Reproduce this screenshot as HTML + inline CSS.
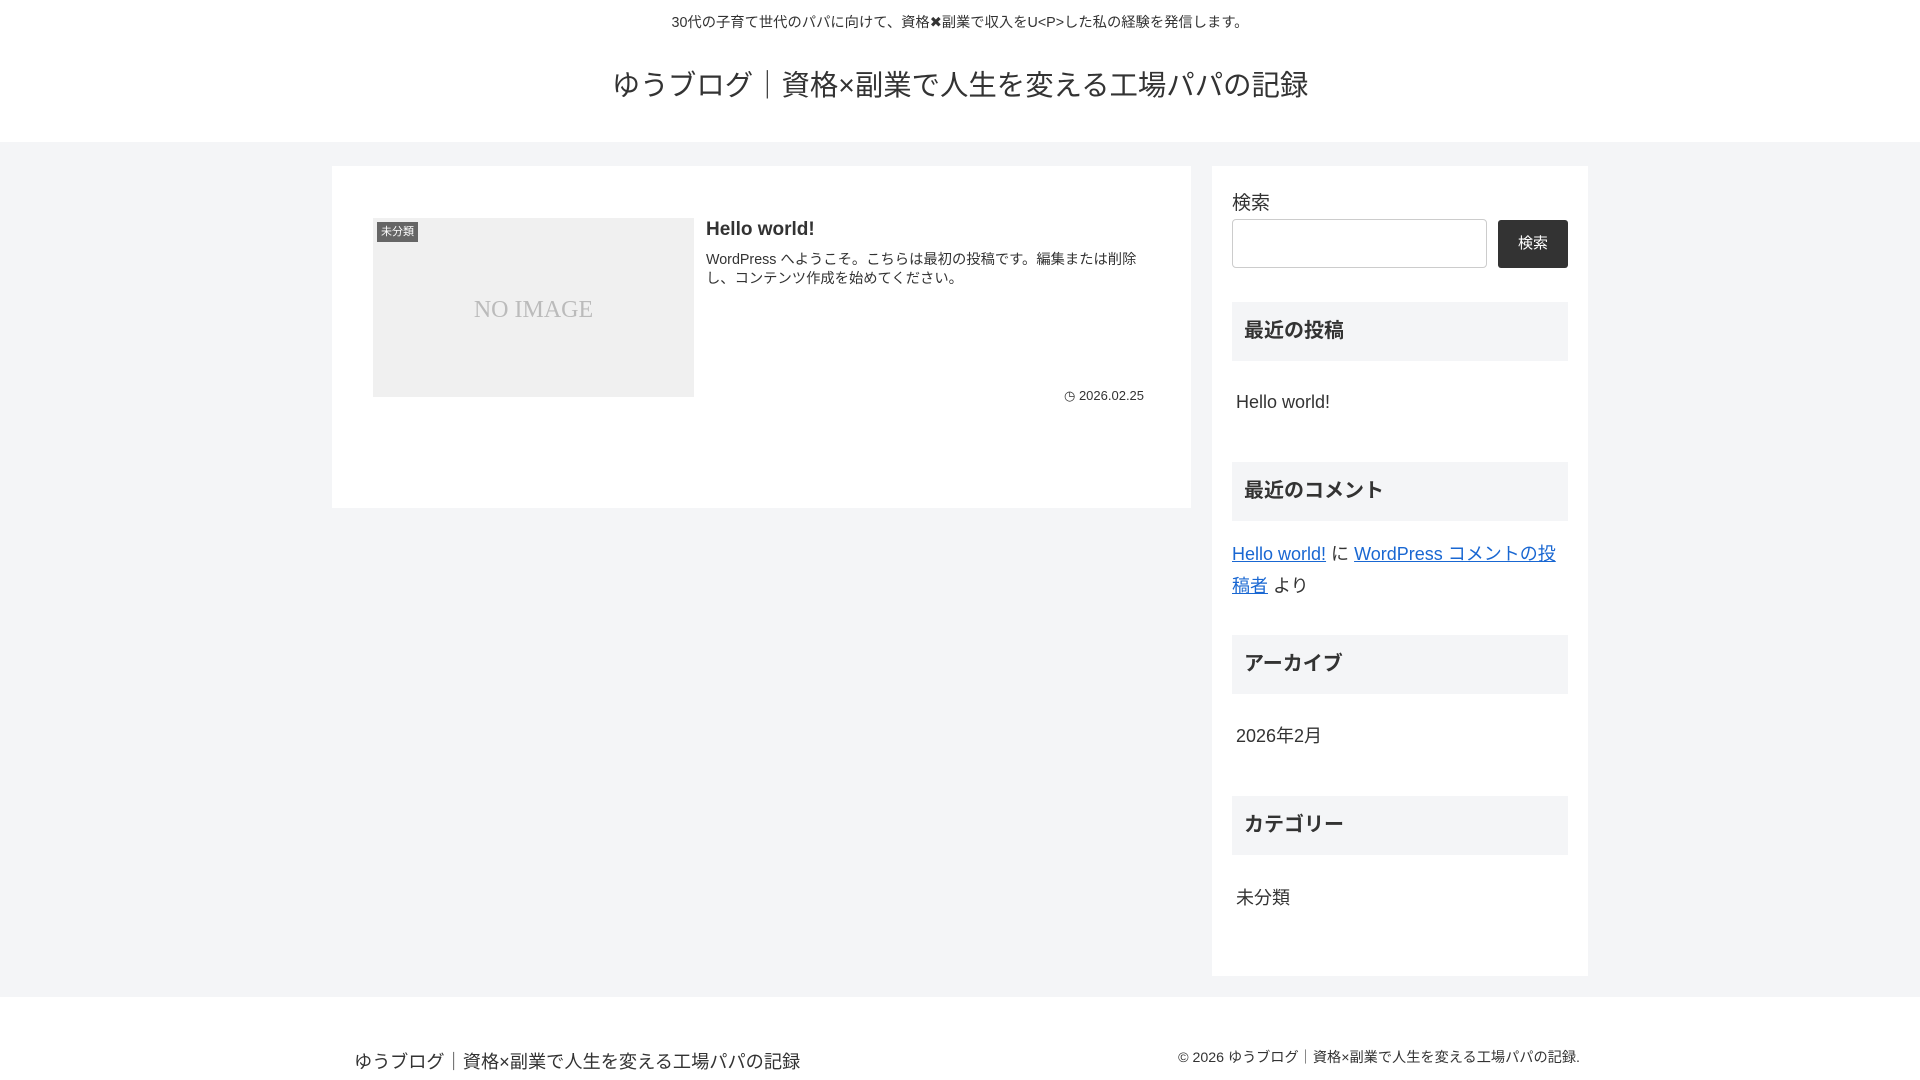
<!DOCTYPE html>
<html lang="ja"><head><meta charset="utf-8">
<style>
*{box-sizing:border-box;margin:0;padding:0}
body{width:1920px;height:1080px;overflow:hidden;background:#f4f5f7;font-family:"Liberation Sans","Noto Sans CJK JP",sans-serif;color:#333;position:relative}
.abs{position:absolute;white-space:nowrap}
header{position:absolute;left:0;top:0;width:1920px;height:142px;background:#fff}
footer{position:absolute;left:0;top:997px;width:1920px;height:83px;background:#fff}
.card{position:absolute;background:#fff}
.wh{position:absolute;left:1232px;width:336px;height:59px;background:#f4f5f7;font-weight:bold;font-size:20px;padding-left:12px;line-height:59px;color:#333}
a{color:#1967d2}
</style></head><body>
<header>
<div class="abs" style="left:0;width:1920px;text-align:center;top:11px;font-size:14.3px;color:#333">30代の子育て世代のパパに向けて、資格✖副業で収入をU&lt;P&gt;した私の経験を発信します。</div>
<div class="abs" style="left:0;width:1920px;text-align:center;top:67px;font-size:28.4px;line-height:38px;color:#333">ゆうブログ｜資格×副業で人生を変える工場パパの記録</div>
</header>

<div class="card" style="left:332px;top:166px;width:859px;height:342px"></div>
<div class="abs" style="left:373px;top:218px;width:321px;height:179px;background:#f0f0f0"></div>
<div class="abs" style="left:373px;top:297px;width:321px;text-align:center;font-family:'Liberation Serif',serif;font-size:24px;color:#bbb">NO IMAGE</div>
<div class="abs" style="left:377px;top:222px;height:20px;padding:0 4px;background:#666;color:#fff;font-size:11px;line-height:20px">未分類</div>
<div class="abs" style="left:706px;top:219px;font-size:19px;font-weight:bold;color:#333">Hello world!</div>
<div class="abs" style="left:706px;top:251px;font-size:14.3px;line-height:19px;color:#333">WordPress へようこそ。こちらは最初の投稿です。編集または削除<br>し、コンテンツ作成を始めてください。</div>
<div class="abs" style="left:1064px;top:388px;font-size:13px;color:#333;width:80px;text-align:right">◷ 2026.02.25</div>

<div class="card" style="left:1212px;top:166px;width:376px;height:810px"></div>
<div class="abs" style="left:1232px;top:188px;font-size:19px">検索</div>
<div class="abs" style="left:1232px;top:219px;width:255px;height:49px;border:1px solid #ccc;border-radius:4px;background:#fff"></div>
<div class="abs" style="left:1498px;top:220px;width:70px;height:48px;background:#333;border-radius:3px;color:#fff;font-size:15px;text-align:center;line-height:48px">検索</div>

<div class="wh" style="top:302px">最近の投稿</div>
<div class="abs" style="left:1236px;top:392px;font-size:18px">Hello world!</div>
<div class="wh" style="top:462px">最近のコメント</div>
<div class="abs" style="left:1232px;top:538px;font-size:18px;line-height:32px"><a href="#">Hello world!</a> に <a href="#">WordPress コメントの投</a><br><a href="#">稿者</a> より</div>
<div class="wh" style="top:635px">アーカイブ</div>
<div class="abs" style="left:1236px;top:722px;font-size:18px">2026年2月</div>
<div class="wh" style="top:796px">カテゴリー</div>
<div class="abs" style="left:1236px;top:884px;font-size:18px">未分類</div>

<footer>
<div class="abs" style="left:354px;top:51px;font-size:18.2px">ゆうブログ｜資格×副業で人生を変える工場パパの記録</div>
<div class="abs" style="right:340px;top:50px;font-size:14.2px">© 2026 ゆうブログ｜資格×副業で人生を変える工場パパの記録.</div>
</footer>
</body></html>
